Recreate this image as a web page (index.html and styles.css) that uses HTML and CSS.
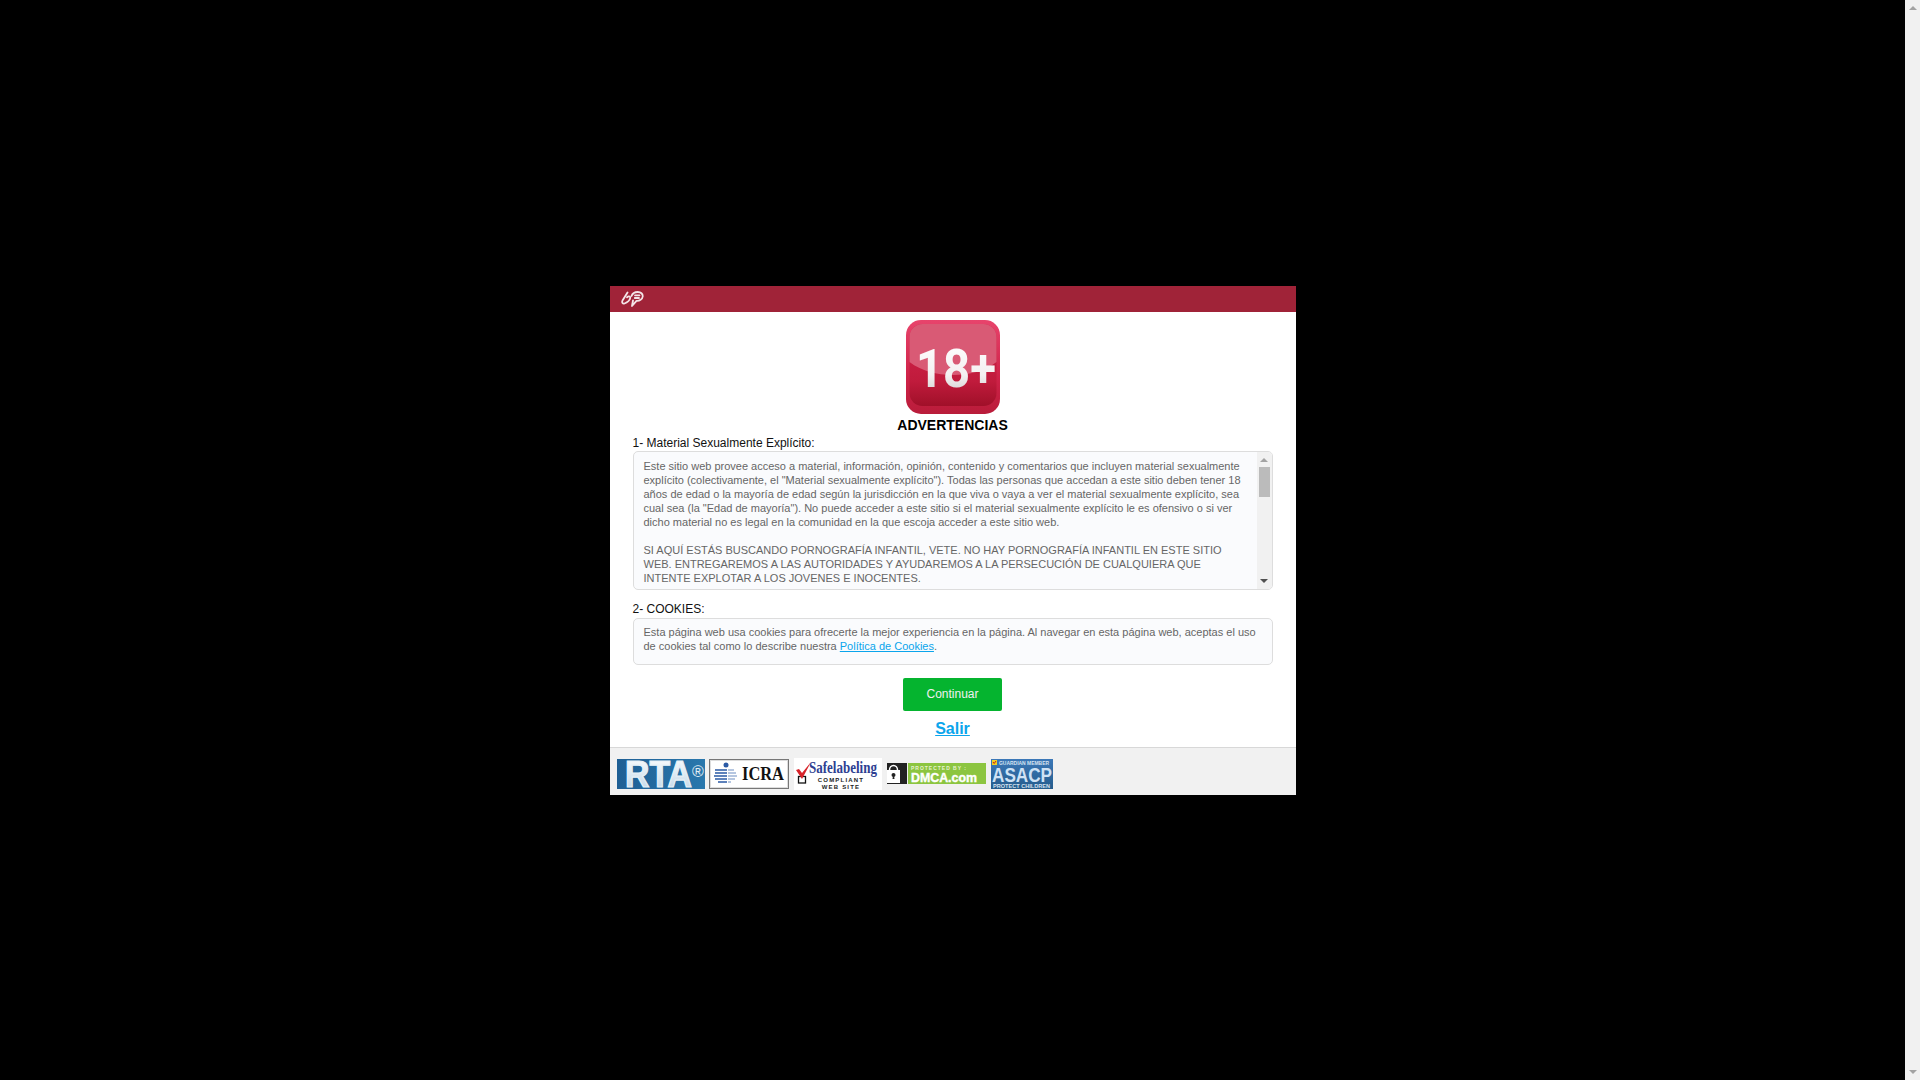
FILE: index.html
```html
<!DOCTYPE html>
<html lang="es">
<head>
<meta charset="utf-8">
<title>Advertencias</title>
<link rel="stylesheet" href="styles.css">
</head>
<body>
<div class="page">
  <div class="modal">
    <div class="modal-head">
      <svg class="head-logo" width="23" height="16" viewBox="0 0 23 16" fill="none" stroke="#f4e6e9" stroke-width="1.800" stroke-linecap="round" stroke-linejoin="round">
        <path d="M6.500 1.500 1.500 9.500c-.9 2 .2 3.600 2 3 2.800-1 5.600-3.600 5.800-5.800.1-1.500-2-1.900-3.300-.4"/>
        <path d="M10.500 5C11.500 2.300 14 1 16.800 1c3 0 5.200 1.900 4.900 4.500-.3 2.800-3.200 4.600-6.200 4.300L11 15l1-5.500"/>
        <path d="M14 4.300h4.500M13.800 7h4.200"/>
      </svg>
    </div>
    <div class="modal-body">
      <svg class="age-icon" width="94" height="94" viewBox="0 0 94 94">
        <defs>
          <linearGradient id="ageBase" x1="0" y1="0" x2="0" y2="1">
            <stop offset="0" stop-color="#e8446c"/>
            <stop offset="0.6" stop-color="#cf2248"/>
            <stop offset="1" stop-color="#b91c3a"/>
          </linearGradient>
          <linearGradient id="ageLow" x1="0" y1="0" x2="0" y2="1">
            <stop offset="0" stop-color="#d5244d"/>
            <stop offset="0.7" stop-color="#c01b3c"/>
            <stop offset="1" stop-color="#a01029"/>
          </linearGradient>
          <linearGradient id="ageText" x1="0" y1="0" x2="0" y2="1">
            <stop offset="0" stop-color="#ffffff"/>
            <stop offset="0.6" stop-color="#f4f0f1"/>
            <stop offset="1" stop-color="#c9c6c7"/>
          </linearGradient>
        </defs>
        <rect width="94" height="94" rx="15" fill="url(#ageBase)"/>
        <rect x="3.500" y="4" width="87" height="82" rx="13" fill="url(#ageLow)"/>
        <path d="M3.500 17a13 13 0 0 1 13-13h61a13 13 0 0 1 13 13v25c-12 9-27 13-43.500 13-16.500 0-31.500-4-43.500-13z" fill="#d95a75"/>
        <text class="age-text" x="10" y="67" fill="url(#ageText)" textLength="80" lengthAdjust="spacingAndGlyphs">18+</text>
      </svg>
      <h1 class="title">ADVERTENCIAS</h1>

      <p class="label">1- Material Sexualmente Explícito:</p>
      <div class="notice notice-scroll">
        <div class="notice-text">
          <p>Este sitio web provee acceso a material, información, opinión, contenido y comentarios que incluyen material sexualmente explícito (colectivamente, el "Material sexualmente explícito"). Todas las personas que accedan a este sitio deben tener 18 años de edad o la mayoría de edad según la jurisdicción en la que viva o vaya a ver el material sexualmente explícito, sea cual sea (la "Edad de mayoría"). No puede acceder a este sitio si el material sexualmente explícito le es ofensivo o si ver dicho material no es legal en la comunidad en la que escoja acceder a este sitio web.</p>
          <p>SI AQUÍ ESTÁS BUSCANDO PORNOGRAFÍA INFANTIL, VETE. NO HAY PORNOGRAFÍA INFANTIL EN ESTE SITIO WEB. ENTREGAREMOS A LAS AUTORIDADES Y AYUDAREMOS A LA PERSECUCIÓN DE CUALQUIERA QUE INTENTE EXPLOTAR A LOS JOVENES E INOCENTES.</p>
        </div>
        <div class="scrollbar">
          <span class="arrow-up"></span>
          <span class="thumb"></span>
          <span class="arrow-down arrow-dark"></span>
        </div>
      </div>

      <p class="label label-second">2- COOKIES:</p>
      <div class="notice notice-cookies">
        <p>Esta página web usa cookies para ofrecerte la mejor experiencia en la página. Al navegar en esta página web, aceptas el uso de cookies tal como lo describe nuestra <a href="#">Política de Cookies</a>.</p>
      </div>

      <a class="btn-continue" href="#">Continuar</a>
      <a class="exit" href="#">Salir</a>
    </div>
    <div class="modal-foot">
      <svg class="badge" width="88" height="30" viewBox="0 0 88 30">
        <defs>
          <linearGradient id="rtaBg" x1="0" y1="0" x2="1" y2="0">
            <stop offset="0" stop-color="#1f5f94"/>
            <stop offset="1" stop-color="#2a78ad"/>
          </linearGradient>
          <linearGradient id="rtaText" x1="0" y1="0" x2="0" y2="1">
            <stop offset="0" stop-color="#ffffff"/>
            <stop offset="1" stop-color="#bcd4e6"/>
          </linearGradient>
        </defs>
        <rect width="88" height="30" fill="url(#rtaBg)"/>
        <text class="rta-text" x="8" y="28" fill="url(#rtaText)" stroke="#e8f1f7" stroke-width="1.200" textLength="67" lengthAdjust="spacingAndGlyphs">RTA</text>
        <text class="rta-reg" x="75" y="18" fill="#e4eef5">®</text>
      </svg>
      <svg class="badge" width="80" height="30" viewBox="0 0 80 30">
        <rect x="0.500" y="0.500" width="79" height="29" fill="#fff" stroke="#777"/>
        <rect x="1.500" y="1.500" width="77" height="27" fill="none" stroke="#ddd"/>
        <circle cx="17" cy="6" r="2.500" fill="#2a5aa5"/>
        <path d="M6 11h12M6 14h12M5 17h13M6 20h12M9 23h9" stroke="#2a5aa5" stroke-width="1.600"/>
        <path d="M19 11h6M19 14h8M19 17h9M19 20h7M19 23h3" stroke="#9db4d6" stroke-width="1.400"/>
        <text class="icra-text" x="33" y="21" textLength="42" lengthAdjust="spacingAndGlyphs">ICRA</text>
      </svg>
      <svg class="badge badge-safe" width="88" height="32" viewBox="0 0 88 32">
        <rect width="88" height="32" fill="#fff"/>
        <rect x="4.500" y="18.500" width="7" height="6.500" fill="none" stroke="#111" stroke-width="1.300"/>
        <path d="M2 12l3-1 3 4L17 4 8 21z" fill="#d8232a"/>
        <text class="safe-title" x="15" y="15" textLength="68" lengthAdjust="spacingAndGlyphs">Safelabeling</text>
        <text class="safe-sub" x="47" y="24" text-anchor="middle">COMPLIANT</text>
        <text class="safe-sub" x="47" y="30.500" text-anchor="middle">WEB SITE</text>
      </svg>
      <svg class="badge badge-dmca" width="99" height="21" viewBox="0 0 99 21">
        <rect width="20" height="21" fill="#222"/>
        <rect x="21" width="78" height="21" fill="#8cc540"/>
        <path d="M2.500 7a4 4.500 0 0 1 8 0" fill="none" stroke="#fff" stroke-width="1.500"/>
        <rect x="0" y="7" width="13" height="13" fill="#fff"/>
        <circle cx="6.500" cy="12" r="2" fill="#222"/>
        <path d="M5.500 16l.6-4h.8l.6 4z" fill="#222"/>
        <text class="dmca-small" x="24" y="7" textLength="55" lengthAdjust="spacing">PROTECTED BY :</text>
        <text class="dmca-big" x="24" y="19" stroke="#fff" stroke-width="0.400" textLength="66" lengthAdjust="spacingAndGlyphs">DMCA.com</text>
      </svg>
      <svg class="badge badge-asacp" width="62" height="30" viewBox="0 0 62 30">
        <defs>
          <linearGradient id="asacpBg" x1="0" y1="0" x2="0" y2="1">
            <stop offset="0" stop-color="#3c78b8"/>
            <stop offset="1" stop-color="#255c8c"/>
          </linearGradient>
        </defs>
        <rect width="62" height="30" fill="url(#asacpBg)"/>
        <rect x="1" y="1" width="5" height="5" fill="#f0d020"/>
        <path d="M2 3l1.200 1.500L5 2" fill="none" stroke="#c81e1e" stroke-width="1"/>
        <text class="asacp-small" x="8" y="6" textLength="50" lengthAdjust="spacingAndGlyphs">GUARDIAN MEMBER</text>
        <text class="asacp-big" x="1" y="22.500" textLength="60" lengthAdjust="spacingAndGlyphs">ASACP</text>
        <text class="asacp-small" x="2" y="29" textLength="57" lengthAdjust="spacingAndGlyphs">PROTECT CHILDREN</text>
      </svg>
    </div>
  </div>
</div>
<div class="scrollbar page-scrollbar">
  <span class="arrow-up"></span>
  <span class="arrow-down"></span>
</div>
</body>
</html>
```
FILE: styles.css
```css
body {margin: 0; height: 100vh; overflow: hidden; background-color: #000000; font-family: "Liberation Sans", Arial, sans-serif; display: flex;}
p {margin: 0;}
a {color: #0ba5ec;}

.page {flex: 1; display: flex; align-items: center; justify-content: center;}
.modal {width: 686px; height: 509px; background-color: #ffffff; display: flex; flex-direction: column;}
.modal-head {height: 26px; box-sizing: border-box; padding: 1px 0 0 11px; background-color: #a02338; display: flex; align-items: center; flex: none;}
.head-logo {display: block;}

.modal-body {flex: 1; padding: 8px 23px 0 23px; display: flex; flex-direction: column; align-items: center; min-height: 0;}
.age-icon {display: block; flex: none;}
.age-text {font-family: "Roboto", sans-serif; font-weight: 700; font-size: 53px;}
.title {margin: 3px 0 0 0; font-size: 14px; line-height: 17px; font-weight: bold; color: #000000;}

.label {align-self: flex-start; font-size: 12px; line-height: 14px; color: #111111; margin-top: 2px;}
.label-second {margin-top: 12px;}

.notice {align-self: stretch; box-sizing: border-box; border: 1px solid #dddddd; border-radius: 5px; background-color: #fafbfd; font-size: 11px; line-height: 14px; color: #666666; flex: none;}
.notice a {color: #0ba5ec;}
.notice-scroll {height: 139px; margin-top: 1px; display: flex; overflow: hidden;}
.notice-text {flex: 1; padding: 7px 9px 0 10px;}
.notice-text p {margin-bottom: 14px;}
.notice-cookies {height: 47px; margin-top: 2px; padding: 6px 9px 0 10px;}

/* hand drawn scrollbars, same look as chrome's classic ones */
.scrollbar {width: 15px; flex: none; background-color: #f1f1f1; display: flex; flex-direction: column; align-items: center; box-sizing: border-box;}
.arrow-up {width: 0; height: 0; margin-top: 6px; border-left: 4px solid transparent; border-right: 4px solid transparent; border-bottom: 4px solid #a3a3a3;}
.arrow-down {width: 0; height: 0; margin-top: auto; margin-bottom: 6px; border-left: 4px solid transparent; border-right: 4px solid transparent; border-top: 4px solid #a3a3a3;}
.arrow-dark {border-top-color: #505050;}
.thumb {width: 11px; height: 30px; margin-top: 5px; background-color: #bbbbbb;}

.btn-continue {margin-top: 13px; width: 99px; height: 33px; border-radius: 2px; background-color: #05b42f; color: #f0f0f0; font-size: 12px; line-height: 33px; text-align: center; text-decoration: none; flex: none;}
.exit {margin-top: 8px; font-size: 16px; line-height: 19px; font-weight: bold; color: #0ba5ec;}

.modal-foot {height: 48px; flex: none; box-sizing: border-box; border-top: 1px solid #d8d8d8; background-color: #f1f1f1; padding: 5px 0 0 7px; display: flex; align-items: center; gap: 4px;}
.badge {display: block; flex: none;}
.badge-safe {margin-left: 1px;}
.badge-dmca {margin-left: 1px;}
.badge-asacp {margin-left: 1px;}

.rta-text {font-family: "Liberation Sans", sans-serif; font-weight: 700; font-size: 36px;}
.rta-reg {font-family: "Liberation Sans", sans-serif; font-size: 16px;}
.icra-text {font-family: "Liberation Serif", serif; font-weight: 700; font-size: 18px; fill: #111111;}
.safe-title {font-family: "Liberation Serif", serif; font-weight: 700; font-size: 17px; fill: #2e3f92;}
.safe-sub {font-family: "Liberation Sans", sans-serif; font-weight: 700; font-size: 6px; letter-spacing: 1.200px; fill: #222222;}
.dmca-small {font-family: "Liberation Sans", sans-serif; font-weight: 700; font-size: 5px; fill: #e6f2d0;}
.dmca-big {font-family: "Liberation Sans", sans-serif; font-weight: 700; font-size: 12.500px; fill: #ffffff;}
.asacp-small {font-family: "Liberation Sans", sans-serif; font-weight: 700; font-size: 6px; fill: #d5e3f0;}
.asacp-big {font-family: "Liberation Sans", sans-serif; font-weight: 700; font-size: 21px; fill: #cfe2f5;}
```
